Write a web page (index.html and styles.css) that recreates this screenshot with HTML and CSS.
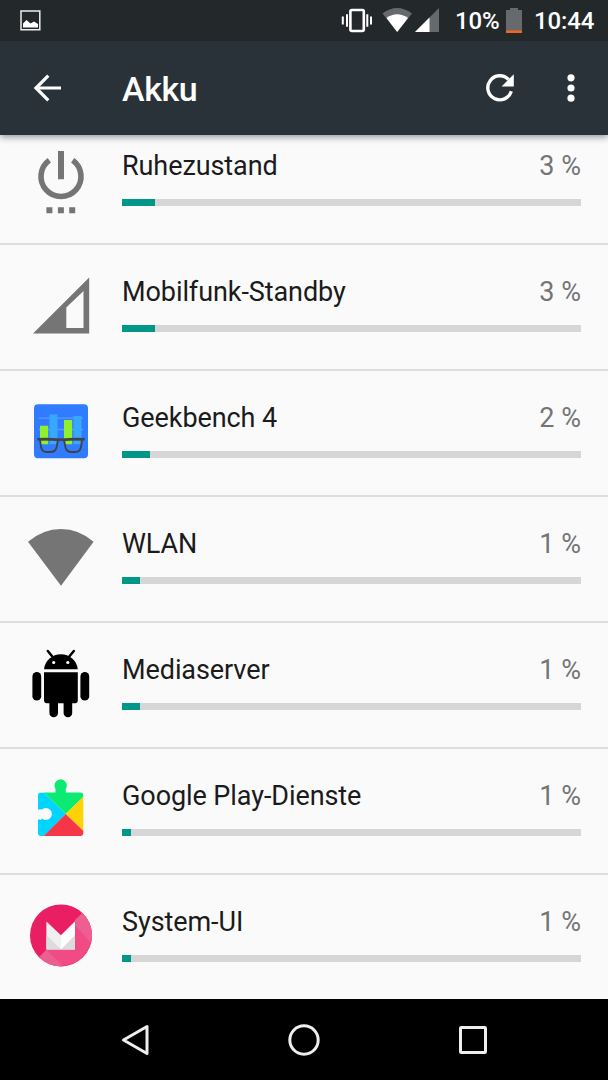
FILE: index.html
```html
<!DOCTYPE html>
<html lang="de">
<head>
<meta charset="utf-8">
<title>Akku</title>
<link rel="stylesheet" href="styles.css">
</head>
<body>
<div class="screen">
  <header class="top">
    <div class="status">
      <svg class="picture" width="22" height="22" viewBox="0 0 22 22"><path d="M1 1h18.800v18.800H1z" fill="none" stroke="#eee" stroke-width="1.500"/><path d="M3 17.500v-4l3.500-3.500 4 3.500 3.500-2 4 2.500v3.500z" fill="#fff"/></svg>
      <svg class="indicators" width="100" height="28" viewBox="340 6 100 28"><rect x="350.400" y="10" width="13.400" height="21" rx="1.500" fill="none" stroke="#fff" stroke-width="2.600"/><path d="M347 14.300v12.400M342.800 16.500v8M367.300 14.300v12.400M371 16.500v8" stroke="#fff" stroke-width="2"/><path d="M382.500 13.500Q397 2.500 412 13.500L397.200 32z" fill="#676a6c"/><path d="M386.500 18Q397 10.500 408 18L397.200 32z" fill="#fff"/><path d="M415 32 439 8v24z" fill="#676a6c"/><path d="M415 32 429.500 17.500V32z" fill="#fff"/></svg>
      <span class="charge">10%</span>
      <svg class="battery" width="18" height="26" viewBox="0 0 18 26"><path d="M1 2h4V0h8v2h4v22H1z" fill="#676a6c"/><path d="M1 22.500h16V25H1z" fill="#f26522"/></svg>
      <span class="clock">10:44</span>
    </div>
    <div class="bar">
      <svg class="back" width="30" height="30" viewBox="0 0 30 30"><path d="M29 15H4M16.300 2.700 4 15 16.300 27.300" fill="none" stroke="#fff" stroke-width="3.200"/></svg>
      <h1 class="title">Akku</h1>
      <svg class="refresh" width="30" height="30" viewBox="0 0 30 30"><path d="M26.300 18.300A12 12 0 1 1 23.500 6.500" fill="none" stroke="#fff" stroke-width="3.400"/><path d="M28.800 1.300v12.200H16.600z" fill="#fff"/></svg>
      <svg class="more" width="10" height="30" viewBox="0 0 10 30"><g fill="#fff"><circle cx="5" cy="4.800" r="3.600"/><circle cx="5" cy="15" r="3.600"/><circle cx="5" cy="25.200" r="3.600"/></g></svg>
    </div>
  </header>
  <main class="list">
    <section class="row">
      <svg class="icon" viewBox="0 0 122 126"><path d="M49.300 42.300A20 20 0 1 0 72.700 42.300" fill="none" stroke="#757575" stroke-width="5.600"/><path d="M58 33h6v28.300h-6zM46.400 89.200h6v6h-6zM57.900 89.200h6v6h-6zM69.200 89.200h6v6h-6z" fill="#757575"/></svg>
      <div class="info"><div class="line"><span class="name">Ruhezustand</span><span class="pct">3 %</span></div><div class="track"><div class="fill" style="width:32.500px"></div></div></div>
    </section>
    <section class="row">
      <svg class="icon" viewBox="0 0 122 126"><path d="M33 89.600 89.200 33.400v56.200zM66.300 84h17.200V47L66.300 63.500z" fill="#757575" fill-rule="evenodd"/></svg>
      <div class="info"><div class="line"><span class="name">Mobilfunk-Standby</span><span class="pct">3 %</span></div><div class="track"><div class="fill" style="width:32.500px"></div></div></div>
    </section>
    <section class="row">
      <svg class="icon" viewBox="0 0 122 126"><rect x="34" y="34.300" width="54" height="54" rx="4" fill="#307bff"/><path d="M39 48.200h44M39 59.500h44" stroke="#5999ff" stroke-width="1.300"/><path d="M40 55.800h8.200v18.400H40zM64 50h8.200v24.200H64z" fill="#8ff02c"/><path d="M49.500 44.600h8v29.600h-8zM73.500 46h8v28.200h-8z" fill="#38a8ff"/><g fill="none" stroke="#424247"><path d="M40 69.500H58L56.500 77.500Q55.500 82 50.500 82H46.500Q42 82 41 77zM82 69.500H64L65.500 77.500Q66.500 82 71.500 82H75.500Q80 82 81 77z" stroke-width="1.800"/><path d="M37.200 69.300Q49 68.300 58.500 70Q61 69 63.500 70Q73 68.300 84.800 69.300" stroke-width="2.600"/></g></svg>
      <div class="info"><div class="line"><span class="name">Geekbench 4</span><span class="pct">2 %</span></div><div class="track"><div class="fill" style="width:27.500px"></div></div></div>
    </section>
    <section class="row">
      <svg class="icon" viewBox="0 0 122 126"><path d="M28 45.800Q43 33 61 33T93.600 45.800L61 89.800z" fill="#757575"/></svg>
      <div class="info"><div class="line"><span class="name">WLAN</span><span class="pct">1 %</span></div><div class="track"><div class="fill" style="width:18.300px"></div></div></div>
    </section>
    <section class="row">
      <svg class="icon" viewBox="0 0 122 126"><path d="M44 47.300a17 16.800 0 0 1 33.800 0zM44 50.200h33.800v28.600a2.400 2.400 0 0 1-2.400 2.400H46.400a2.400 2.400 0 0 1-2.400-2.400z"/><path d="M47.800 29l4.500 5.500M73.800 29l-4.500 5.500" stroke="#000" stroke-width="2.500" stroke-linecap="round"/><rect x="32.400" y="50" width="8.800" height="28.600" rx="4.400"/><rect x="80.400" y="50" width="8.800" height="28.600" rx="4.400"/><rect x="49.400" y="72" width="8.600" height="23.300" rx="4.300"/><rect x="63.600" y="72" width="8.600" height="23.300" rx="4.300"/><circle cx="53.700" cy="40.500" r="1.600" fill="#fff"/><circle cx="67.800" cy="40.500" r="1.600" fill="#fff"/></svg>
      <div class="info"><div class="line"><span class="name">Mediaserver</span><span class="pct">1 %</span></div><div class="track"><div class="fill" style="width:18.300px"></div></div></div>
    </section>
    <section class="row">
      <svg class="icon" viewBox="0 0 122 126"><defs><clipPath id="piece"><path d="M41 44.500H55.500V41A6.200 6.200 0 1 1 65.800 41V44.500H80.300a3 3 0 0 1 3 3V85a3 3 0 0 1-3 3H41a3 3 0 0 1-3-3V71.500H40A1 1 0 0 0 41.500 70.300A6.100 6.100 0 1 0 41.500 61.700A1 1 0 0 0 40 61.500H38V47.500a3 3 0 0 1 3-3z"/></clipPath></defs><g clip-path="url(#piece)"><path d="M38 44.500h6L65.700 66 44 88h-6z" fill="#00d5ff"/><path d="M44 44.500 51 28h22l10.500 16.500v4.200L65.700 66z" fill="#0beb73"/><path d="M84 48v35.600L65.700 66z" fill="#ffd206"/><path d="M43.700 88 65.700 66 84 83.600V88z" fill="#f53648"/></g></svg>
      <div class="info"><div class="line"><span class="name">Google Play-Dienste</span><span class="pct">1 %</span></div><div class="track"><div class="fill" style="width:9.300px"></div></div></div>
    </section>
    <section class="row">
      <svg class="icon" viewBox="0 0 122 126"><circle cx="61" cy="61.400" r="31" fill="#ea1e63"/><path d="M82.400 38.900A31 31 0 1 1 39.100 83.300z" fill="#f04b84"/><path d="M82.400 38.900A31 31 0 0 1 91 69L75 51v-5zM39.100 83.300A31 31 0 0 0 63 92.300L46.500 75.800z" fill="#ed5f90"/><path d="M46.400 47.500 61 61.300v14.300H46.400z" fill="#f0f0f0"/><path d="M75 47.500 61 61.300v14.300h14z" fill="#fff"/><path d="M46.400 61 61 75.500 75 61v14.600H46.400z" fill="#dcdcdc"/></svg>
      <div class="info"><div class="line"><span class="name">System-UI</span><span class="pct">1 %</span></div><div class="track"><div class="fill" style="width:9.300px"></div></div></div>
    </section>
  </main>
  <nav class="nav">
    <svg width="32" height="34" viewBox="0 0 32 34"><path d="M28 3.500v27L4.500 17z" fill="none" stroke="#eee" stroke-width="3" stroke-linejoin="round"/></svg>
    <svg width="32" height="34" viewBox="0 0 32 34"><circle cx="16" cy="17" r="14.200" fill="none" stroke="#eee" stroke-width="3"/></svg>
    <svg width="32" height="34" viewBox="0 0 32 34"><rect x="3.500" y="4.500" width="25" height="25" rx=".8" fill="none" stroke="#eee" stroke-width="3"/></svg>
  </nav>
</div>
</body>
</html>
```
FILE: styles.css
```css
* { box-sizing: border-box; }
body { margin: 0; font-family: Roboto, sans-serif; background: #000; }
svg { display: block; flex: none; }
.screen { width: 608px; height: 1080px; display: flex; flex-direction: column; overflow: hidden; }
.top { flex: none; height: 135px; background: #283238; z-index: 1; box-shadow: 0 2px 7px rgba(0,0,0,.42); }
.status { height: 41px; background: #23282b; display: flex; align-items: center; padding: 0 14px 0 20px; color: #fff; font-size: 24px; font-weight: 500; line-height: 41px; }
.indicators { margin-left: auto; margin-top: -1px; }
.charge { width: 49px; margin: 2px 0 0 15px; letter-spacing: -.2px; }
.battery { margin-left: 1px; }
.clock { width: 60px; margin: 2px 0 0 11px; letter-spacing: -.1px; }
.bar { height: 94px; display: flex; align-items: center; padding: 0 32px; color: #fff; }
.title { margin: 1px 0 0 60px; font-size: 34px; font-weight: 500; line-height: 40px; letter-spacing: -.4px; }
.refresh { margin-left: auto; }
.more { margin: 0 0 0 51px; }
.list { flex: none; height: 864px; background: #fafafa; overflow: hidden; display: flex; flex-direction: column; justify-content: flex-end; }
.row { flex: none; height: 126px; display: flex; border-top: 2px solid #dedede; }
.icon { width: 122px; height: 126px; margin-top: -1px; }
.info { width: 459px; padding-top: 31px; }
.line { height: 49px; display: flex; justify-content: space-between; line-height: 32px; font-size: 27px; color: #1b1b1b; }
.name { letter-spacing: -.08px; }
.pct { color: #757575; }
.track { height: 7px; background: #d6d6d6; }
.fill { height: 7px; background: #009688; }
.nav { flex: 1; display: flex; justify-content: space-between; align-items: center; padding: 0 119px; background: #000; }
```
